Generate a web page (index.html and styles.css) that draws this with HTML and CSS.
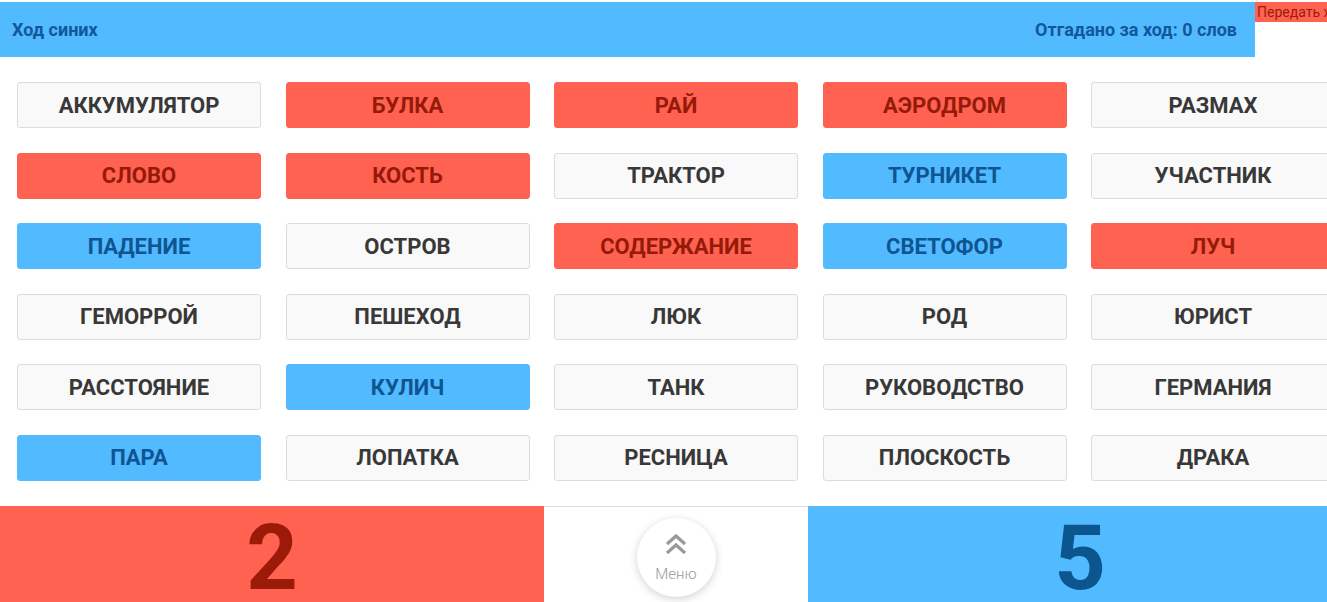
FILE: index.html
```html
<!DOCTYPE html>
<html lang="ru">
<head>
<meta charset="utf-8">
<title>Игра</title>
<link rel="stylesheet" href="styles.css">
</head>
<body>
<div class="page">
  <header class="topbar">
    <div class="status">
      <span class="turn">Ход синих</span>
      <span class="guessed">Отгадано за ход: 0 слов</span>
    </div>
    <button class="pass">Передать ход</button>
  </header>
  <main class="board">
    <div class="card">АККУМУЛЯТОР</div>
    <div class="card red">БУЛКА</div>
    <div class="card red">РАЙ</div>
    <div class="card red">АЭРОДРОМ</div>
    <div class="card">РАЗМАХ</div>
    <div class="card red">СЛОВО</div>
    <div class="card red">КОСТЬ</div>
    <div class="card">ТРАКТОР</div>
    <div class="card blue">ТУРНИКЕТ</div>
    <div class="card">УЧАСТНИК</div>
    <div class="card blue">ПАДЕНИЕ</div>
    <div class="card">ОСТРОВ</div>
    <div class="card red">СОДЕРЖАНИЕ</div>
    <div class="card blue">СВЕТОФОР</div>
    <div class="card red">ЛУЧ</div>
    <div class="card">ГЕМОРРОЙ</div>
    <div class="card">ПЕШЕХОД</div>
    <div class="card">ЛЮК</div>
    <div class="card">РОД</div>
    <div class="card">ЮРИСТ</div>
    <div class="card">РАССТОЯНИЕ</div>
    <div class="card blue">КУЛИЧ</div>
    <div class="card">ТАНК</div>
    <div class="card">РУКОВОДСТВО</div>
    <div class="card">ГЕРМАНИЯ</div>
    <div class="card blue">ПАРА</div>
    <div class="card">ЛОПАТКА</div>
    <div class="card">РЕСНИЦА</div>
    <div class="card">ПЛОСКОСТЬ</div>
    <div class="card">ДРАКА</div>
  </main>
  <footer class="scores">
    <div class="score score-red">2</div>
    <div class="middle">
      <button class="menu">
        <svg class="chev" width="24" height="22" viewBox="0 0 24 22" aria-hidden="true">
          <polyline points="3,11 12,3 21,11" fill="none" stroke="#9a9a9a" stroke-width="3.2"/>
          <polyline points="3,20 12,12 21,20" fill="none" stroke="#9a9a9a" stroke-width="3.2"/>
        </svg>
        <span class="menu-label">Меню</span>
      </button>
    </div>
    <div class="score score-blue">5</div>
  </footer>
</div>
</body>
</html>
```

FILE: styles.css
```css
html, body {
  margin: 0;
  padding: 0;
  overflow: hidden;
  background: #ffffff;
}

.page {
  width: 1352px;
  padding-top: 2px;
  font-family: Roboto, "Liberation Sans", sans-serif;
}

.topbar {
  display: flex;
  height: 55px;
}

.status {
  width: 1255px;
  background: #52baff;
  display: flex;
  align-items: center;
  justify-content: space-between;
  padding: 0 18px 0 12px;
  box-sizing: border-box;
  color: #10589a;
  font-weight: 700;
  font-size: 18px;
}

.pass {
  flex: 1;
  height: 20px;
  margin: 0;
  padding: 0 0 0 2px;
  border: none;
  background: #ff6250;
  color: #9a1c0c;
  font-family: Roboto, "Liberation Sans", sans-serif;
  font-size: 14px;
  text-align: left;
  white-space: nowrap;
  overflow: hidden;
}

.board {
  display: grid;
  grid-template-columns: repeat(5, 1fr);
  column-gap: 24.5px;
  row-gap: 24.5px;
  padding: 25px 17px 25px 17px;
}

.card {
  height: 46px;
  box-sizing: border-box;
  border: 1px solid #dcdcdc;
  border-radius: 3px;
  background: #f9f9f9;
  color: #383838;
  display: flex;
  align-items: center;
  justify-content: center;
  font-weight: 700;
  font-size: 22px;
  letter-spacing: 0;
}

.card.red {
  background: #ff6250;
  border-color: #ff6250;
  color: #951a0a;
}

.card.blue {
  background: #52baff;
  border-color: #52baff;
  color: #0e5592;
}

.scores {
  display: flex;
  height: 96px;
}

.score {
  display: flex;
  align-items: flex-start;
  justify-content: center;
  font-weight: 700;
  font-size: 90px;
  line-height: 80px;
  padding-top: 13px;
  box-sizing: border-box;
}

.score-red {
  width: 544px;
  background: #ff6250;
  color: #9c1a08;
}

.score-blue {
  flex: 1;
  background: #52baff;
  color: #0c5690;
}

.middle {
  width: 264px;
  border-top: 1px solid #dddddd;
  box-sizing: border-box;
  display: flex;
  justify-content: center;
  padding-top: 11px;
}

.menu {
  width: 79px;
  height: 79px;
  border-radius: 50%;
  border: none;
  background: #ffffff;
  box-shadow: 0 2px 9px rgba(0, 0, 0, 0.18);
  display: flex;
  flex-direction: column;
  align-items: center;
  padding: 15px 0 0 0;
  margin: 0;
}

.chev {
  display: block;
}

.menu-label {
  margin-top: 10px;
  font-family: Roboto, "Liberation Sans", sans-serif;
  font-weight: 300;
  font-size: 15px;
  color: #9a9a9a;
}
```
